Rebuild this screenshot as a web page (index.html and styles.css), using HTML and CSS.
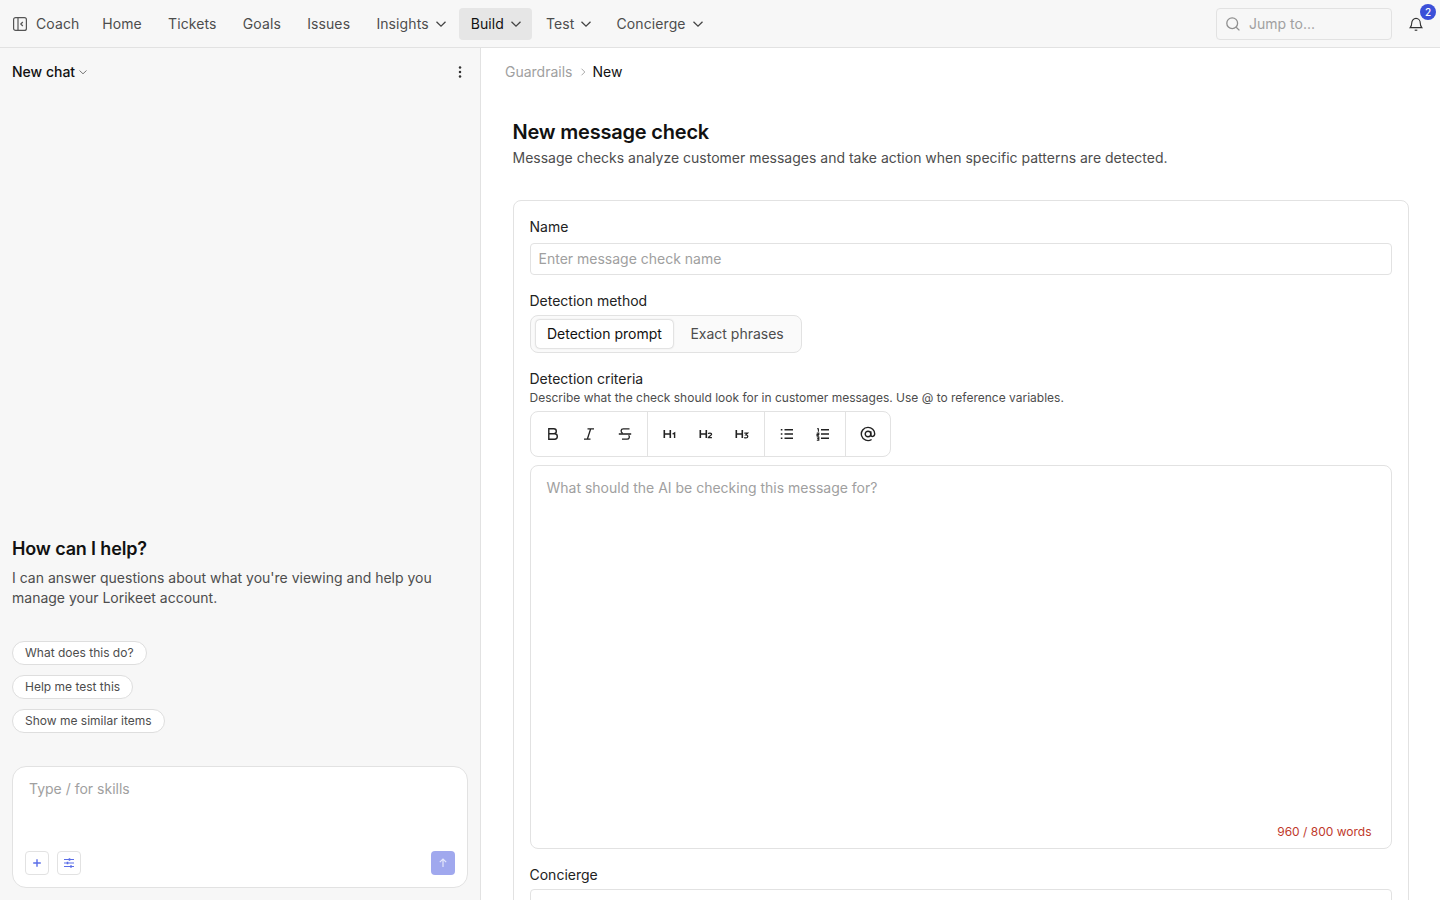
FILE: index.html
```html
<!DOCTYPE html>
<html>
<head>
	<title>New message check</title>
	<meta charset="utf-8">
	<link rel="stylesheet" href="styles.css">
</head>
<body>
	<header class="topbar">
		<nav class="navbar">
			<a class="navitem coach">
				<svg class="coachicon" width="16" height="16" viewBox="0 0 16 16" fill="none" stroke="#555" stroke-width="1.2"><rect x="1.6" y="1.6" width="12.8" height="12.8" rx="2"/><path d="M6 1.6v12.8M10.8 6 8.8 8l2 2"/></svg>
				Coach
			</a>
			<a class="navitem">Home</a>
			<a class="navitem">Tickets</a>
			<a class="navitem">Goals</a>
			<a class="navitem">Issues</a>
			<a class="navitem navmenu">Insights <svg class="chev" width="12" height="12" viewBox="0 0 12 12"><path d="M1.5 3.8 6 8.2l4.5-4.4"/></svg></a>
			<a class="navitem navmenu navactive">Build <svg class="chev" width="12" height="12" viewBox="0 0 12 12"><path d="M1.5 3.8 6 8.2l4.5-4.4"/></svg></a>
			<a class="navitem navmenu">Test <svg class="chev" width="12" height="12" viewBox="0 0 12 12"><path d="M1.5 3.8 6 8.2l4.5-4.4"/></svg></a>
			<a class="navitem navmenu">Concierge <svg class="chev" width="12" height="12" viewBox="0 0 12 12"><path d="M1.5 3.8 6 8.2l4.5-4.4"/></svg></a>
		</nav>
		<div class="topright">
			<div class="jump">
				<svg width="16" height="16" viewBox="0 0 16 16" fill="none" stroke="#8f8f8f" stroke-width="1.3"><circle cx="7.2" cy="7.2" r="5.4"/><path d="m11.2 11.2 3.2 3.2"/></svg>
				<span>Jump to...</span>
			</div>
			<div class="bell">
				<svg width="16" height="16" viewBox="0 0 16 16" fill="none" stroke="#333" stroke-width="1.15"><path d="M2.2 11.6c.9-1 1.5-1.8 1.5-4.3C3.700 4.600 5.500 2.400 8 2.400s4.300 2.200 4.300 4.900c0 2.500.6 3.300 1.500 4.300z"/><path d="M6.700 14.200h2.600"/></svg>
				<span class="badge">2</span>
			</div>
		</div>
	</header>

	<div class="columns">
		<aside class="side">
			<div class="sidehead">
				<div class="newchat">New chat <svg width="10" height="10" viewBox="0 0 10 10" fill="none" stroke="#777" stroke-width="1"><path d="M1.500 3.500 5 6.800l3.500-3.300"/></svg></div>
				<svg width="16" height="16" viewBox="0 0 16 16" fill="#333"><circle cx="8" cy="3.500" r="1.250"/><circle cx="8" cy="8" r="1.250"/><circle cx="8" cy="12.500" r="1.250"/></svg>
			</div>
			<div class="sidebody">
				<h2>How can I help?</h2>
				<p>I can answer questions about what you're viewing and help you manage your Lorikeet account.</p>
				<div class="chips">
					<span class="chip">What does this do?</span>
					<span class="chip">Help me test this</span>
					<span class="chip">Show me similar items</span>
				</div>
			</div>
			<div class="composer">
				<div class="composertext">Type / for skills</div>
				<div class="composerbtns">
					<span class="smallbtn"><svg width="12" height="12" viewBox="0 0 12 12" fill="none" stroke="#5b6ee8" stroke-width="1.400"><path d="M6 2.200v7.600M2.200 6h7.600"/></svg></span>
					<span class="smallbtn"><svg width="12" height="12" viewBox="0 0 12 12" fill="none" stroke="#5b6ee8" stroke-width="1.200"><path d="M1 2.500h10M1 6h10M1 9.500h10"/><path d="M6.500 1.200v2.600M4.500 4.700v2.600M8 8.200v2.600" stroke-width="1.600"/></svg></span>
					<span class="sendbtn"><svg width="12" height="12" viewBox="0 0 12 12" fill="none" stroke="#e4e7fb" stroke-width="1.200"><path d="M6 10V2.200M2.800 5.200 6 2l3.200 3.200"/></svg></span>
				</div>
			</div>
		</aside>

		<main class="main">
			<div class="crumbs">
				<span class="crumbold">Guardrails</span>
				<svg width="10" height="10" viewBox="0 0 10 10" fill="none" stroke="#aaa" stroke-width="1"><path d="M3.500 1.700 6.800 5 3.500 8.300"/></svg>
				<span>New</span>
			</div>
			<div class="content">
				<h1>New message check</h1>
				<p class="sub">Message checks analyze customer messages and take action when specific patterns are detected.</p>
				<div class="card">
					<label class="lbl">Name</label>
					<div class="input">Enter message check name</div>

					<label class="lbl lblmethod">Detection method</label>
					<div class="tabs">
						<span class="tab tabon">Detection prompt</span>
						<span class="tab">Exact phrases</span>
					</div>

					<label class="lbl lblcriteria">Detection criteria</label>
					<div class="hint">Describe what the check should look for in customer messages. Use @ to reference variables.</div>

					<div class="toolbar">
						<div class="toolgroup">
							<span class="tool"><svg width="16" height="16" viewBox="0 0 16 16" fill="none" stroke="#222" stroke-width="1.400"><path d="M3.800 2.800h5a2.500 2.500 0 0 1 0 5h-5zM3.800 7.800h5.800a2.700 2.700 0 0 1 0 5.400H3.800zM3.800 2.800v10.400"/></svg></span>
							<span class="tool"><svg width="16" height="16" viewBox="0 0 16 16" fill="none" stroke="#222" stroke-width="1.300"><path d="M6.500 2.800h6.500M3 13.200h6.500M9.700 2.800 6.300 13.200"/></svg></span>
							<span class="tool"><svg width="16" height="16" viewBox="0 0 16 16" fill="none" stroke="#222" stroke-width="1.300"><path d="M12.500 2.800H6.300c-2.600 0-3 3.400-.6 4.400M1.800 8h12.400M5 13.200h5c2.400 0 3-2.600 1.600-4"/></svg></span>
						</div>
						<div class="toolgroup">
							<span class="tool"><svg width="16" height="16" viewBox="0 0 16 16" fill="none" stroke="#222" stroke-width="1.600"><path d="M2.300 4v8M8.300 4v8M2.300 8h6"/><path d="M10.600 8.200 12.600 7v5" stroke-width="1.400"/></svg></span>
							<span class="tool"><svg width="16" height="16" viewBox="0 0 16 16" fill="none" stroke="#222" stroke-width="1.600"><path d="M2.300 4v8M8.300 4v8M2.300 8h6"/><path d="M10.300 8c.2-1.200 3.300-1.200 3.300.3 0 1.400-3.300 2-3.300 3.400h3.600" stroke-width="1.300"/></svg></span>
							<span class="tool"><svg width="16" height="16" viewBox="0 0 16 16" fill="none" stroke="#222" stroke-width="1.600"><path d="M2.300 4v8M8.300 4v8M2.300 8h6"/><path d="M10.300 7.200h3.300l-1.700 1.700c2.500 0 2.500 3-.1 3-.7 0-1.200-.2-1.500-.6" stroke-width="1.300"/></svg></span>
						</div>
						<div class="toolgroup">
							<span class="tool"><svg width="16" height="16" viewBox="0 0 16 16" fill="none" stroke="#222" stroke-width="1.400"><path d="M5.500 3.800H14M5.500 8H14M5.500 12.200H14M1.800 3.800h1.600M1.800 8h1.600M1.800 12.200h1.600"/></svg></span>
							<span class="tool"><svg width="16" height="16" viewBox="0 0 16 16" fill="none" stroke="#222" stroke-width="1.400"><path d="M6 3.800h8M6 8h8M6 12.200h8"/><path d="M2 2.800h1.400v3M1.800 7h2v1.400H2v1.400h2M1.800 11h2v3.200h-2M2.200 12.600h1.600" stroke-width="1.100"/></svg></span>
						</div>
						<div class="toolgroup">
							<span class="tool"><svg width="16" height="16" viewBox="0 0 16 16" fill="none" stroke="#222" stroke-width="1.400"><circle cx="8" cy="8" r="2.800"/><path d="M10.800 5.200v3.600c0 2.400 3.900 2.200 3.900-1 0-3.700-3-6.400-6.700-6.400a6.600 6.600 0 1 0 3.600 12.100"/></svg></span>
						</div>
					</div>

					<div class="editor">
						<div class="editortext">What should the AI be checking this message for?</div>
						<div class="count">960 / 800 words</div>
					</div>

					<label class="lbl lblconcierge">Concierge</label>
					<div class="input"></div>
				</div>
			</div>
		</main>
	</div>
</body>
</html>
```

FILE: styles.css
```css
html, body {
	height: 100%;
	overflow: hidden;
}
body {
	margin: 0;
	font-family: Inter, "Liberation Sans", sans-serif;
	font-size: 14px;
	line-height: 20px;
	color: #111;
	background-color: #fff;
	display: flex;
	flex-direction: column;
}

.topbar {
	height: 47px;
	flex: none;
	background-color: #f7f7f7;
	border-bottom: 1px solid #e2e2e2;
	display: flex;
	align-items: center;
	justify-content: space-between;
	padding: 0 8px 0 0;
}
.navbar {
	display: flex;
	align-items: center;
}
.navitem {
	display: flex;
	align-items: center;
	height: 32px;
	padding: 0 12px;
	margin-right: 2.25px;
	border-radius: 4px;
	color: #4d4d4d;
	letter-spacing: 0.1px;
	white-space: nowrap;
}
.navitem.coach {
	padding-right: 8.5px;
	gap: 8px;
}
.navmenu {
	gap: 6px;
	padding-right: 9.75px;
}
.navactive {
	background-color: #e6e6e6;
	color: #111;
}
.chev {
	fill: none;
	stroke: #444;
	stroke-width: 1.3;
}
.topright {
	display: flex;
	align-items: center;
	gap: 16px;
}
.jump {
	width: 176px;
	height: 32px;
	box-sizing: border-box;
	border: 1px solid #e2e2e2;
	border-radius: 4px;
	display: flex;
	align-items: center;
	gap: 8px;
	padding-left: 8px;
	color: #a0a0a0;
}
.bell {
	position: relative;
	width: 16px;
	height: 16px;
	margin-right: 8px;
	display: flex;
}
.badge {
	position: absolute;
	top: -12px;
	left: 12px;
	width: 16px;
	height: 16px;
	border-radius: 50%;
	background-color: #3b4fd8;
	color: #fff;
	font-size: 10px;
	line-height: 16px;
	font-weight: 500;
	text-align: center;
}

.columns {
	flex: 1;
	display: flex;
	min-height: 0;
}
.side {
	flex: none;
	background-color: #f7f7f7;
	border-right: 1px solid #e2e2e2;
	display: flex;
	flex-direction: column;
	padding: 0 12px 12px;
	box-sizing: content-box;
	width: 456px;
}
.sidehead {
	height: 48px;
	flex: none;
	display: flex;
	align-items: center;
	justify-content: space-between;
}
.newchat {
	display: flex;
	align-items: center;
	gap: 3px;
	font-weight: 500;
}
.sidebody {
	flex: 1;
	display: flex;
	flex-direction: column;
	justify-content: flex-end;
	padding-bottom: 33px;
}
.sidebody h2 {
	font-size: 18px;
	line-height: 28px;
	font-weight: 600;
	letter-spacing: -0.15px;
	margin: 0 0 5px;
}
.sidebody p {
	margin: 0 0 33px;
	color: #4d4d4d;
}
.chips {
	display: flex;
	flex-direction: column;
	align-items: flex-start;
	gap: 10px;
}
.chip {
	height: 22px;
	padding: 0 12px;
	border: 1px solid #dedede;
	border-radius: 12px;
	background-color: #fff;
	font-size: 12px;
	line-height: 22px;
	color: #4d4d4d;
}
.composer {
	height: 122px;
	flex: none;
	background-color: #fff;
	border: 1px solid #e2e2e2;
	border-radius: 14px;
	display: flex;
	flex-direction: column;
	justify-content: space-between;
	padding: 12px;
	box-sizing: border-box;
}
.composertext {
	padding-left: 4px;
	color: #a0a0a0;
}
.composerbtns {
	display: flex;
	gap: 8px;
}
.smallbtn, .sendbtn {
	width: 24px;
	height: 24px;
	box-sizing: border-box;
	border-radius: 4px;
	display: flex;
	align-items: center;
	justify-content: center;
}
.smallbtn {
	border: 1px solid #e2e2e2;
}
.sendbtn {
	margin-left: auto;
	background-color: #a0a8ee;
}

.main {
	flex: 1;
	min-width: 0;
	overflow: hidden;
}
.crumbs {
	height: 48px;
	display: flex;
	align-items: center;
	gap: 5px;
	padding-left: 24px;
}
.crumbold {
	color: #a0a0a0;
}
.content {
	padding: 22px 31px 0 31.5px;
}
.content h1 {
	font-size: 20px;
	line-height: 28px;
	font-weight: 600;
	letter-spacing: -0.2px;
	margin: 0;
}
.sub {
	margin: 2px 0 32px;
	color: #4d4d4d;
}
.card {
	border: 1px solid #e2e2e2;
	border-radius: 8px;
	padding: 16px;
}
.lbl {
	display: block;
	font-weight: 400;
	margin-bottom: 6px;
	color: #222;
}
.lblmethod {
	margin-top: 16px;
	margin-bottom: 4px;
}
.lblcriteria {
	margin-top: 16px;
	margin-bottom: 0;
}
.lblconcierge {
	margin-top: 16px;
	margin-bottom: 4px;
}
.input {
	height: 32px;
	box-sizing: border-box;
	border: 1px solid #e2e2e2;
	border-radius: 4px;
	padding: 0 8px;
	line-height: 30px;
	color: #a0a0a0;
}
.tabs {
	display: inline-flex;
	gap: 5px;
	height: 38px;
	box-sizing: border-box;
	padding: 4px 5.5px 4px 5px;
	border: 1px solid #e2e2e2;
	border-radius: 8px;
	background-color: #fafafa;
}
.tab {
	padding: 0 12px;
	line-height: 28px;
	color: #4d4d4d;
	border-radius: 4px;
}
.tabon {
	padding: 0 11.5px;
	background-color: #fff;
	color: #111;
	box-shadow: 0 0 2px rgba(0, 0, 0, 0.35);
}
.hint {
	font-size: 12px;
	line-height: 16px;
	color: #4d4d4d;
	margin-top: 1px;
	margin-bottom: 5px;
}
.toolbar {
	display: inline-flex;
	height: 44px;
	box-sizing: content-box;
	border: 1px solid #e2e2e2;
	border-radius: 8px;
	margin-bottom: 8px;
	vertical-align: top;
}
.toolgroup {
	display: flex;
	align-items: center;
	padding: 0 4px;
	border-left: 1px solid #e2e2e2;
}
.toolgroup:first-child {
	border-left: 0;
}
.tool {
	width: 36px;
	height: 36px;
	display: flex;
	align-items: center;
	justify-content: center;
}
.editor {
	height: 384px;
	box-sizing: border-box;
	border: 1px solid #e2e2e2;
	border-radius: 8px;
	padding: 12px 19.5px 8px 16px;
	display: flex;
	flex-direction: column;
	justify-content: space-between;
}
.editortext {
	color: #a0a0a0;
}
.count {
	align-self: flex-end;
	font-size: 12px;
	line-height: 16px;
	color: #c0392b;
}
```
